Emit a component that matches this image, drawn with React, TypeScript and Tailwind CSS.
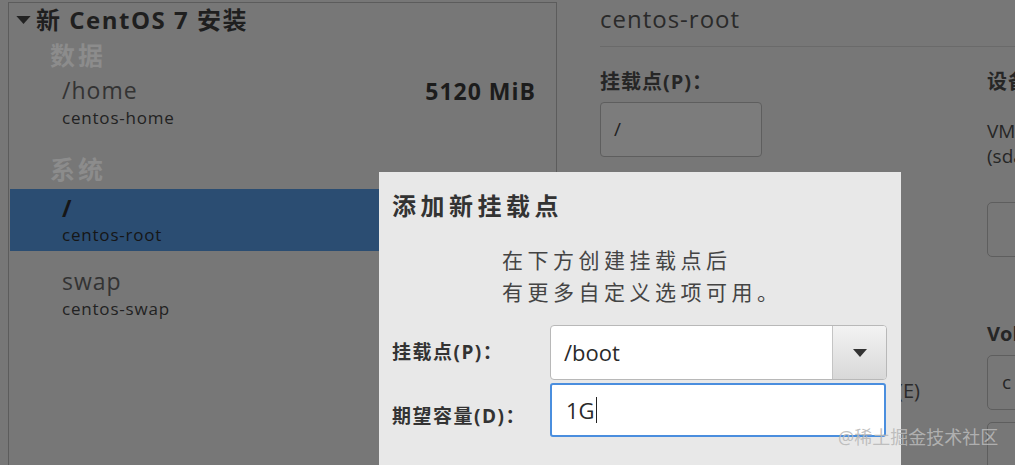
import React from "react";

const font = { fontFamily: '"Open Sans", "Noto Sans CJK SC", sans-serif' };

function Caret({ className }: { className?: string }) {
  return (
    <svg className={className} viewBox="0 0 16 9" fill="currentColor">
      <path d="M0 0h16L8 9z" />
    </svg>
  );
}

export default function App() {
  return (
    <div
      style={font}
      className="relative flex w-[1015px] h-[465px] overflow-hidden bg-[#777777] text-[#262626]"
    >
      {/* left list of mount points */}
      <div className="w-[557px] shrink-0 pl-[8px] pt-[2px]">
        <div className="h-[463px] border-l border-t border-r border-[#5c5c5c] flex flex-col">
          <div className="h-[34px] flex items-center pl-[7px] gap-[5px]">
            <Caret className="w-[15px] h-[8px] text-[#222]" />
            <span className="text-[24px] font-bold leading-none tracking-[1.5px] text-[#1f1f1f]">
              新 CentOS 7 安装
            </span>
          </div>
          <div className="h-[38px] flex items-center pl-[41px] text-[25px] font-bold tracking-[3px] text-[#8c8c8c]">
            数据
          </div>
          <div className="h-[76px] flex justify-between pl-[53px] pr-[20px]">
            <div className="flex flex-col">
              <span className="text-[23px] leading-[30px] tracking-[1px] text-[#333]">/home</span>
              <span className="text-[17px] leading-[26px] tracking-[0.8px] text-[#222]">centos-home</span>
            </div>
            <span className="text-[23px] font-bold leading-[32px] tracking-[1px] text-[#1c1c1c]">5120 MiB</span>
          </div>
          <div className="h-[38px] flex items-center pl-[41px] text-[25px] font-bold tracking-[3px] text-[#8c8c8c]">
            系统
          </div>
          <div className="h-[62px] ml-px bg-[#2b4d72] flex flex-col pl-[52px] pt-[4px]">
            <span className="text-[23px] leading-[30px] font-bold text-[#161616]">/</span>
            <span className="text-[17px] leading-[24px] tracking-[0.8px] text-[#161616]">centos-root</span>
          </div>
          <div className="flex flex-col pl-[53px] pt-[14px]">
            <span className="text-[23px] leading-[32px] tracking-[1px] text-[#333]">swap</span>
            <span className="text-[17px] leading-[24px] tracking-[0.8px] text-[#222]">centos-swap</span>
          </div>
        </div>
      </div>

      {/* right detail pane */}
      <div className="flex-1 pl-[43px]">
        <div className="h-[47px] border-b border-[#6a6a6a] pt-[4px]">
          <span className="text-[24px] leading-[30px] tracking-[1px] text-[#2a2a2a]">centos-root</span>
        </div>
        <div className="flex">
          <div className="w-[387px] shrink-0 flex flex-col">
            <span className="mt-[22px] text-[20px] font-bold leading-[26px] tracking-[1px] text-[#262626]">
              挂载点(P)：
            </span>
            <div className="mt-[7px] w-[162px] h-[55px] rounded-[4px] border border-[#5e5e5e] bg-[#7c7c7c] flex items-center pl-[13px] text-[19px] text-[#222]">
              /
            </div>
            <div className="mt-[221px] w-[320px] text-right text-[20px] leading-[26px] text-[#2a2a2a]">
              加密(E)
            </div>
          </div>
          <div className="flex flex-col">
            <span className="mt-[22px] text-[20px] font-bold leading-[26px] tracking-[1px] whitespace-nowrap">设备</span>
            <span className="mt-[24px] text-[19px] leading-[25px] whitespace-nowrap">VMware</span>
            <span className="text-[19px] leading-[25px] whitespace-nowrap">(sda)</span>
            <div className="mt-[33px] w-[80px] h-[55px] rounded-[5px] border border-[#5e5e5e]" />
            <span className="mt-[64px] text-[20px] font-bold leading-[26px] whitespace-nowrap">Volume</span>
            <div className="mt-[8px] w-[80px] h-[55px] rounded-[5px] border border-[#5e5e5e] flex items-center pl-[14px] text-[19px]">
              c
            </div>
            <div className="mt-[12px] w-[80px] h-[55px] rounded-[5px] border border-[#5e5e5e]" />
          </div>
        </div>
      </div>

      {/* modal dialog */}
      <div className="absolute left-[379px] top-[172px] w-[522px] h-[293px] bg-[#e8e8e8] pl-[13px] pt-[19px] text-[#2e2e2e]">
        <div className="text-[24px] font-bold leading-[30px] tracking-[4.5px] text-[#333]">添加新挂载点</div>
        <div className="mt-[23px] pl-[110px] text-[21px] leading-[32px] tracking-[4.5px] text-[#444]">
          <div>在下方创建挂载点后</div>
          <div>有更多自定义选项可用。</div>
        </div>
        <div className="mt-[17px] flex items-center">
          <span className="w-[158px] text-[19px] font-bold tracking-[1.5px] text-[#333]">挂载点(P)：</span>
          <div className="w-[337px] h-[55px] rounded-[4px] border border-[#b8b8b8] bg-white flex overflow-hidden">
            <span className="flex-1 flex items-center pl-[13px] text-[22px] text-[#2a2a2a]">/boot</span>
            <div className="w-[54px] border-l border-[#c4c4c4] bg-gradient-to-b from-[#f3f3f3] to-[#d8d8d8] flex items-center justify-center">
              <Caret className="w-[14px] h-[8px] text-[#333]" />
            </div>
          </div>
        </div>
        <div className="mt-[3px] flex items-center">
          <span className="w-[158px] text-[19px] font-bold tracking-[1.5px] text-[#333] pt-[12px]">期望容量(D)：</span>
          <div className="w-[336px] h-[54px] rounded-[3px] border-2 border-[#4a8ede] bg-white flex items-center pl-[14px] text-[22px] text-[#2a2a2a]">
            1G<span className="ml-px w-px h-[26px] bg-[#222]" />
          </div>
        </div>
      </div>

      {/* watermark */}
      <div className="absolute left-[838px] top-[426px] text-[18px] leading-[22px] text-[#b8b8b8]/90 whitespace-nowrap">
        @稀土掘金技术社区
      </div>
    </div>
  );
}
